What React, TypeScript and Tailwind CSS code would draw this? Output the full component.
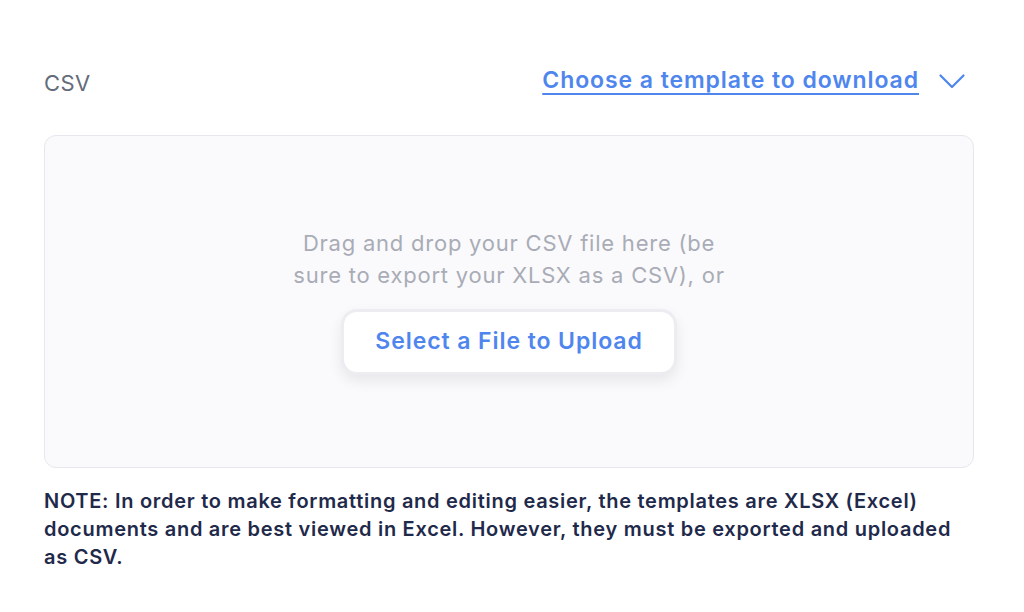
export default function App() {
  return (
    <div className="min-h-screen bg-white pl-[44px] pr-[50px] pt-[67px] font-['Inter','Noto_Sans',sans-serif]">
      <div className="flex items-center justify-between">
        <span className="text-[22px] tracking-[0.02em] text-[#646b7a]">CSV</span>
        <button
          type="button"
          className="-mt-[6px] mr-[9px] flex items-center gap-[20px] text-[23px] font-semibold tracking-[0.04em] text-[#4f86ee]"
        >
          <span className="underline decoration-2 underline-offset-[5px]">
            Choose a template to download
          </span>
          <svg width="26" height="15" viewBox="0 0 26 15" fill="none" className="mt-[2px]">
            <polyline
              points="1.5,1.5 13,13 24.5,1.5"
              stroke="currentColor"
              strokeWidth="2.2"
              strokeLinecap="round"
              strokeLinejoin="round"
            />
          </svg>
        </button>
      </div>

      <div className="mt-[35px] flex h-[333px] flex-col items-center justify-center rounded-[12px] border border-[#e6e7ec] bg-[#fafafc]">
        <p className="-mt-[2px] max-w-[448px] text-center text-[22px] leading-[32px] tracking-[0.035em] text-[#a9acb6]">
          Drag and drop your CSV file here (be sure to export your XLSX as a
          CSV), or
        </p>
        <button
          type="button"
          className="mt-[18px] h-[66px] w-[336px] shrink-0 rounded-[16px] border-[3px] border-[#ececf1] bg-white text-[23px] font-semibold tracking-[0.04em] text-[#4f86ee] shadow-[0_6px_14px_rgba(0,0,0,0.08)]"
        >
          Select a File to Upload
        </button>
      </div>

      <p className="mt-[19px] text-[20px] font-semibold leading-[28px] tracking-[0.036em] text-[#1f2a4b]">
        NOTE: In order to make formatting and editing easier, the templates are
        XLSX (Excel) documents and are best viewed in Excel. However, they must
        be exported and uploaded as CSV.
      </p>
    </div>
  );
}
